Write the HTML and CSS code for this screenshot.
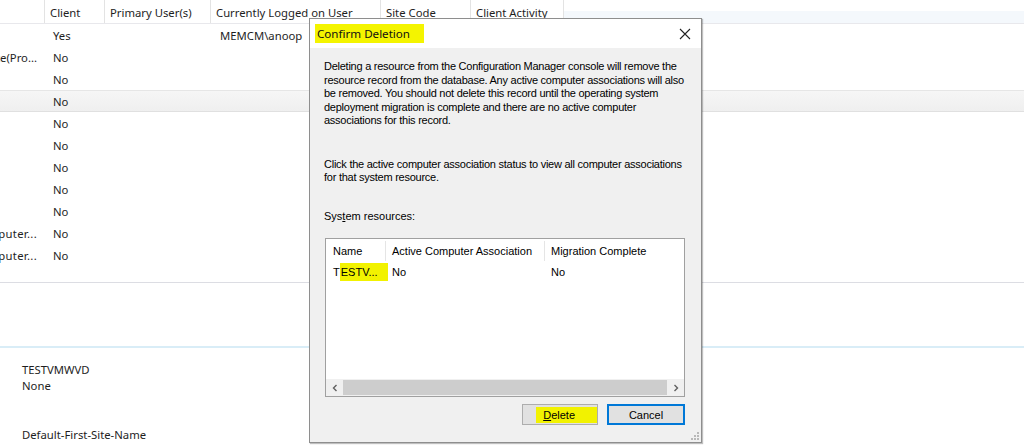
FILE: index.html
```html
<!DOCTYPE html>
<html>
<head>
<meta charset="utf-8">
<link rel="stylesheet" href="styles.css">
</head>
<body>
<div class="screen">
  <div class="grid">
    <div class="hdr">
      <div class="c c0"></div>
      <div class="c c1">Client</div>
      <div class="c c2">Primary User(s)</div>
      <div class="c c3">Currently Logged on User</div>
      <div class="c c4">Site Code</div>
      <div class="c c5">Client Activity</div>
      <div class="c cf"></div>
    </div>
    <div class="row"><div class="v v0"></div><div class="v v1">Yes</div><div class="v v2"></div><div class="v v3">MEMCM\anoop</div></div>
    <div class="row"><div class="v v0"><span>Compute(Pro...</span></div><div class="v v1">No</div></div>
    <div class="row"><div class="v v0"></div><div class="v v1">No</div></div>
    <div class="row sel"><div class="v v0"></div><div class="v v1">No</div></div>
    <div class="row"><div class="v v0"></div><div class="v v1">No</div></div>
    <div class="row"><div class="v v0"></div><div class="v v1">No</div></div>
    <div class="row"><div class="v v0"></div><div class="v v1">No</div></div>
    <div class="row"><div class="v v0"></div><div class="v v1">No</div></div>
    <div class="row"><div class="v v0"></div><div class="v v1">No</div></div>
    <div class="row"><div class="v v0 wide"><span>Computer...</span></div><div class="v v1">No</div></div>
    <div class="row"><div class="v v0 wide"><span>Computer...</span></div><div class="v v1">No</div></div>
  </div>
  <div class="gap"></div>
  <div class="details">
    <div class="dl">TESTVMWVD</div>
    <div class="dl">None</div>
    <div class="dl"></div>
    <div class="dl"></div>
    <div class="dl">Default-First-Site-Name</div>
  </div>

  <div class="dialog">
    <div class="titlebar">
      <span class="title">Confirm Deletion</span>
      <svg class="close" width="12" height="12" viewBox="0 0 12 12"><path d="M1 1 L11 11 M11 1 L1 11" stroke="#222" stroke-width="1.1" fill="none"/></svg>
    </div>
    <div class="dbody">
      <p class="p1">Deleting a resource from the Configuration Manager console will remove the resource record from the database. Any active computer associations will also be removed. You should not delete this record until the operating system deployment migration is complete and there are no active computer associations for this record.</p>
      <p class="p2">Click the active computer association status to view all computer associations for that system resource.</p>
      <p class="p3">Sys<u>t</u>em resources:</p>
      <div class="lv">
        <div class="lvh">
          <div class="lc lc1">Name</div>
          <div class="lc lc2">Active Computer Association</div>
          <div class="lc lc3">Migration Complete</div>
        </div>
        <div class="lvr">
          <div class="lc lc1">T<span class="hl hl1">ESTV...</span></div>
          <div class="lc lc2">No</div>
          <div class="lc lc3">No</div>
        </div>
        <div class="lvspace"></div>
        <div class="hscroll">
          <div class="arrow"><svg width="8" height="8" viewBox="0 0 8 8"><path d="M5.5 1 L2.5 4 L5.5 7" stroke="#606060" stroke-width="1.4" fill="none"/></svg></div>
          <div class="thumb"></div>
          <div class="arrow"><svg width="8" height="8" viewBox="0 0 8 8"><path d="M2.5 1 L5.5 4 L2.5 7" stroke="#606060" stroke-width="1.4" fill="none"/></svg></div>
        </div>
      </div>
      <div class="buttons">
        <div class="btn btn-del"><span class="hl hl2"><u>D</u>elete</span></div>
        <div class="btn btn-cancel">Cancel</div>
      </div>
      <div class="grip">
        <span></span><span></span><span></span><span></span><span></span><span></span>
      </div>
    </div>
  </div>
</div>
</body>
</html>
```

FILE: styles.css
```css
html, body {
  margin: 0;
  padding: 0;
  background: #fff;
}
.screen {
  position: relative;
  width: 1024px;
  height: 445px;
  overflow: hidden;
  font-family: "Noto Sans", "Liberation Sans", sans-serif;
  font-size: 11.3px;
  color: #1e1e1e;
}
.grid {
  height: 282px;
  border-bottom: 1px solid #dcdde3;
}
.hdr {
  display: flex;
  height: 23px;
  border-bottom: 1px solid #e8e8ec;
}
.hdr .c {
  box-sizing: border-box;
  border-right: 1px solid #e3e3e3;
  padding-left: 5px;
  line-height: 26px;
  white-space: nowrap;
  overflow: hidden;
}
.c0 { width: 45px; }
.c1 { width: 60px; }
.c2 { width: 106px; }
.c3 { width: 170px; }
.c4 { width: 90px; }
.c5 { width: 93px; }
.hdr .cf {
  flex: 1;
  border-right: none;
  background: linear-gradient(#fff 0, #fff 11px, #f4f8fc 11px);
}
.row {
  display: flex;
  height: 22px;
  align-items: center;
}
.row.sel {
  background: linear-gradient(#f6f6f6, #efefef);
  border-top: 1px solid #e6e6e6;
  border-bottom: 1px solid #e0e0e0;
  height: 20px;
}
.v { white-space: nowrap; }
.v0 {
  width: 45px;
  box-sizing: border-box;
  padding-right: 8px;
  display: flex;
  justify-content: flex-end;
  overflow: hidden;
}
.v0.wide span { letter-spacing: 0.3px; }
.v1 { width: 60px; box-sizing: border-box; padding-left: 8px; }
.v2 { width: 106px; }
.v3 { width: 170px; box-sizing: border-box; padding-left: 9px; }
.gap {
  height: 63px;
  border-bottom: 2px solid #d9edf7;
}
.details {
  padding: 14px 0 0 22px;
}
.dl {
  height: 16.3px;
  line-height: 16px;
}

/* Dialog */
.dialog {
  position: absolute;
  left: 309px;
  top: 18px;
  width: 393px;
  height: 425px;
  box-sizing: border-box;
  border: 1px solid #8e8e8e;
  box-shadow: 1px 1px 1px rgba(0,0,0,0.25);
  display: flex;
  flex-direction: column;
  font-family: "Liberation Sans", Arial, sans-serif;
  font-size: 11px;
  color: #000;
}
.titlebar {
  height: 29px;
  background: #fff;
  display: flex;
  align-items: center;
  justify-content: space-between;
  padding: 0 10px 0 5px;
}
.title {
  font-family: "Noto Sans", "Liberation Sans", sans-serif;
  font-size: 11.6px;
  background: #f4f400;
  padding: 2px 14px 2px 2px;
  color: #111;
}
.close { display: block; }
.dbody {
  flex: 1;
  background: #f0f0f0;
  padding: 12px 16px 0 14px;
  position: relative;
}
.dbody p {
  margin: 0 -4px 0 0;
  line-height: 13.5px;
  letter-spacing: -0.25px;
}
.p2 { margin-top: 30px !important; }
.p3 { margin-top: 25px !important; letter-spacing: 0 !important; }
.lv {
  margin: 15px 0 0 1px;
  width: 360px;
  height: 159px;
  box-sizing: border-box;
  border: 1px solid #a0a0a0;
  background: #fff;
  display: flex;
  flex-direction: column;
}
.lvh {
  display: flex;
  height: 22px;
  align-items: stretch;
}
.lvh .lc {
  display: flex;
  align-items: center;
  border-right: 1px solid #e5e5e5;
  margin-top: 2px;
}
.lvh .lc3 { border-right: none; }
.lc {
  box-sizing: border-box;
  white-space: nowrap;
}
.lc1 { width: 60px; padding-left: 7px; }
.lc2 { width: 159px; padding-left: 6px; }
.lc3 { flex: 1; padding-left: 6px; }
.lvr {
  display: flex;
  height: 22px;
  align-items: center;
}
.hl { background: #f2f200; }
.hl1 { padding: 3px 10px 3px 1px; }
.lvspace { flex: 1; }
.hscroll {
  height: 17px;
  display: flex;
  background: #f0f0f0;
}
.arrow {
  width: 17px;
  display: flex;
  align-items: center;
  justify-content: center;
}
.thumb {
  flex: 1;
  background: #cdcdcd;
  margin: 1px 0;
}
.buttons {
  display: flex;
  justify-content: flex-end;
  gap: 9px;
  margin-top: 7px;
}
.btn {
  box-sizing: border-box;
  width: 76px;
  height: 21px;
  background: #e1e1e1;
  border: 1px solid #adadad;
  display: flex;
  align-items: center;
  justify-content: center;
}
.btn-del {
  justify-content: flex-end;
  align-items: stretch;
  padding: 2px 0 1px 0;
}
.hl2 {
  padding: 0 22px 0 7px;
  display: flex;
  align-items: center;
}
.btn-cancel {
  width: 78px;
  border: 1px solid #0078d7;
  box-shadow: inset 0 0 0 1px #0078d7;
}
.grip {
  position: absolute;
  right: 2px;
  bottom: 2px;
  width: 9px;
  height: 9px;
}
.grip span {
  position: absolute;
  width: 2px;
  height: 2px;
  background: #b8b8b8;
}
.grip span:nth-child(1) { right: 0; bottom: 0; }
.grip span:nth-child(2) { right: 3px; bottom: 0; }
.grip span:nth-child(3) { right: 6px; bottom: 0; }
.grip span:nth-child(4) { right: 0; bottom: 3px; }
.grip span:nth-child(5) { right: 3px; bottom: 3px; }
.grip span:nth-child(6) { right: 0; bottom: 6px; }
```
